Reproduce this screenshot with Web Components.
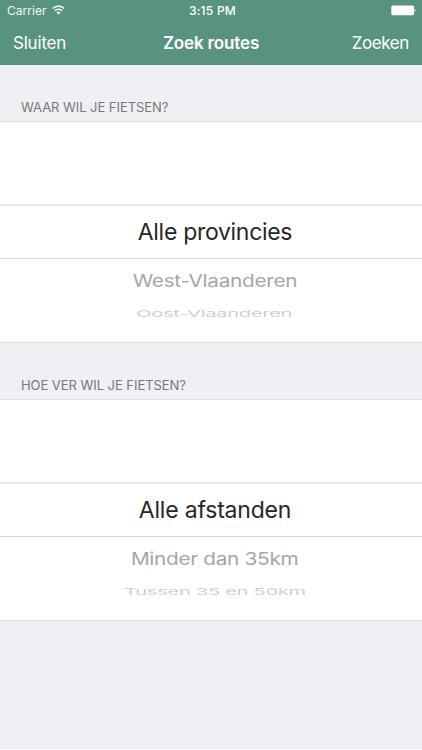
<!DOCTYPE html>
<html lang="nl">
<head>
<meta charset="utf-8">
<title>Zoek routes</title>
<style>
  body {
    margin: 0;
    background: #fff;
    font-family: Inter, "Liberation Sans", sans-serif;
  }
</style>
</head>
<body>
<search-screen>
  <status-bar slot="top" carrier="Carrier" time="3:15 PM"></status-bar>
  <nav-bar slot="top">
    <span slot="left">Sluiten</span>
    Zoek routes
    <span slot="right">Zoeken</span>
  </nav-bar>
  <picker-section label="Waar wil je fietsen?">
    <picker-item style="--spacing: -0.3px">Alle provincies</picker-item>
    <picker-item distance="1">West-Vlaanderen</picker-item>
    <picker-item distance="2">Oost-Vlaanderen</picker-item>
  </picker-section>
  <picker-section label="Hoe ver wil je fietsen?">
    <picker-item style="--spacing: -0.2px">Alle afstanden</picker-item>
    <picker-item distance="1">Minder dan 35km</picker-item>
    <picker-item distance="2">Tussen 35 en 50km</picker-item>
  </picker-section>
</search-screen>

<script>
class SearchScreen extends HTMLElement {
  constructor() {
    super();
    this.attachShadow({ mode: 'open' });
    this.shadowRoot.innerHTML = `
      <style>
        :host {
          display: flex;
          flex-direction: column;
          height: 749px;
          background: #efeff4;
        }
        header {
          box-sizing: border-box;
          height: 65px;
          color: #fff;
          background: #58937f;
        }
      </style>
      <header><slot name="top"></slot></header>
      <slot></slot>
    `;
  }
}

class StatusBar extends HTMLElement {
  connectedCallback() {
    this.attachShadow({ mode: 'open' });
    this.shadowRoot.innerHTML = `
      <style>
        :host {
          display: grid;
          grid-template-columns: 1fr auto 1fr;
          align-items: center;
          box-sizing: border-box;
          height: 21px;
          padding: 0 6px 0 7px;
          font-size: 12px;
          line-height: 21px;
        }
        .carrier {
          display: flex;
          align-items: center;
          gap: 5px;
          letter-spacing: 0.05px;
          opacity: 0.92;
        }
        .time {
          font-weight: 550;
          letter-spacing: 0.25px;
          padding-left: 2px;
        }
        .carrier svg { margin-top: -2px; }
        svg { display: block; }
        .battery { justify-self: end; }
      </style>
      <div class="carrier">
        <span></span>
        <svg width="13" height="10" viewBox="0 0 13 10" fill="none" stroke="#fff" stroke-width="1.6">
          <path d="M0.8 3.5a8.1 8.1 0 0 1 11.4 0"/>
          <path d="M2.9 5.8a5.1 5.1 0 0 1 7.2 0"/>
          <path d="M6.5 9.4L4.5 7.4a2.9 2.9 0 0 1 4 0z" fill="#fff" stroke="none"/>
        </svg>
      </div>
      <div class="time"></div>
      <svg class="battery" width="25" height="11" viewBox="0 0 25 11" fill="#fff">
        <rect x="0.3" y="0.4" width="22.7" height="9.8" rx="1.5"/>
        <path d="M23.6 3.6c1.3 0.5 1.3 3 0 3.5z"/>
      </svg>
    `;
    this.shadowRoot.querySelector('span').textContent = this.getAttribute('carrier');
    this.shadowRoot.querySelector('.time').textContent = this.getAttribute('time');
  }
}

class NavBar extends HTMLElement {
  constructor() {
    super();
    this.attachShadow({ mode: 'open' });
    this.shadowRoot.innerHTML = `
      <style>
        :host {
          display: grid;
          grid-template-columns: 1fr auto 1fr;
          align-items: center;
          height: 44px;
          padding: 0 13px;
          font-size: 17px;
          letter-spacing: -0.2px;
        }
        .title {
          font-weight: 600;
          letter-spacing: -0.15px;
        }
        .right {
          text-align: right;
          letter-spacing: -0.4px;
        }
      </style>
      <div><slot name="left"></slot></div>
      <div class="title"><slot></slot></div>
      <div class="right"><slot name="right"></slot></div>
    `;
  }
}

class PickerSection extends HTMLElement {
  connectedCallback() {
    this.attachShadow({ mode: 'open' });
    this.shadowRoot.innerHTML = `
      <style>
        :host { display: block; }
        h2 {
          box-sizing: border-box;
          height: 56px;
          margin: 0;
          padding: 33px 21px 0;
          font-size: 13px;
          font-weight: 400;
          line-height: 18px;
          letter-spacing: -0.05px;
          color: #77777c;
          text-transform: uppercase;
        }
        .wheel {
          box-sizing: border-box;
          height: 222px;
          padding-top: 82px;
          border-top: 1px solid #dedee2;
          border-bottom: 1px solid #dedee2;
          background: #fff;
        }
      </style>
      <h2></h2>
      <div class="wheel"><slot></slot></div>
    `;
    this.shadowRoot.querySelector('h2').textContent = this.getAttribute('label');
  }
}

// distance = number of rows below the selected one, flatter the further away
class PickerItem extends HTMLElement {
  constructor() {
    super();
    this.attachShadow({ mode: 'open' });
    this.shadowRoot.innerHTML = `
      <style>
        :host {
          display: flex;
          align-items: center;
          justify-content: center;
          box-sizing: border-box;
          height: 55px;
          padding-left: 8px;
          border-top: 2px solid #e8e8e8;
          border-bottom: 1px solid #d8d8d8;
          font-size: 23px;
          font-weight: 375;
          color: #262626;
          white-space: nowrap;
        }
        span {
          letter-spacing: var(--spacing, -0.35px);
          transform: scale(var(--sx, 1), var(--sy, 1));
        }
        :host([distance]) {
          padding-left: 7px;
          border: 0;
        }
        :host([distance="1"]) {
          --sx: 0.904;
          --sy: 0.75;
          height: 43px;
          color: #a6a6a6;
        }
        :host([distance="2"]) {
          --sx: 0.874;
          --sy: 0.4;
          height: 23px;
          color: #cfcfcf;
        }
      </style>
      <span><slot></slot></span>
    `;
  }
}

customElements.define('search-screen', SearchScreen);
customElements.define('status-bar', StatusBar);
customElements.define('nav-bar', NavBar);
customElements.define('picker-section', PickerSection);
customElements.define('picker-item', PickerItem);
</script>
</body>
</html>
